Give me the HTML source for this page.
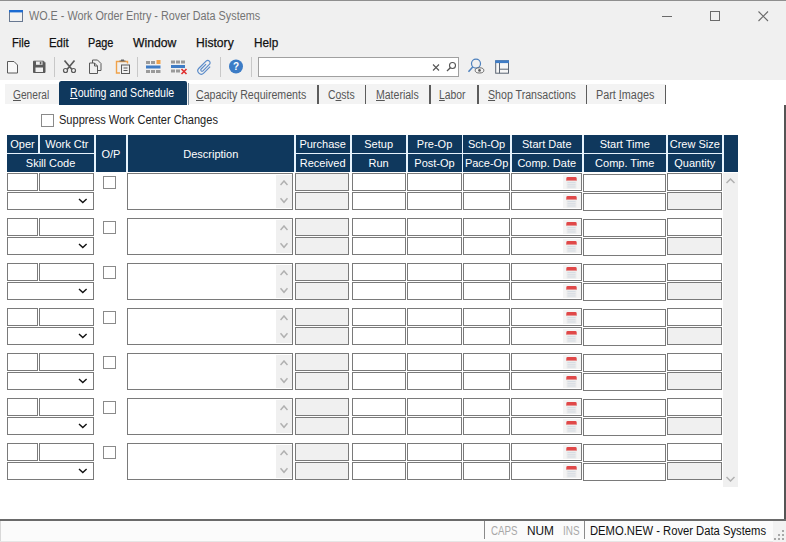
<!DOCTYPE html><html><head><meta charset="utf-8"><title>WO.E - Work Order Entry - Rover Data Systems</title><style>
*{box-sizing:border-box;margin:0;padding:0}
html,body{width:786px;height:542px;overflow:hidden;background:#fff}
body{position:relative;font-family:"Liberation Sans",sans-serif;font-size:12px;color:#1a1a1a}
.a{position:absolute}
.t{position:absolute;white-space:nowrap;line-height:1;transform-origin:0 0}
.h{position:absolute;background:#0f385d;color:#fff;text-align:center;font-size:11px;white-space:nowrap;overflow:hidden;padding-top:0.6px}
.i{position:absolute;border:1px solid #7a7a7a;background:#fff}
.g{background:#f0f0f0}
.sep{position:absolute;width:1px;background:#c8c8c8;top:57px;height:20px}
.tsep{position:absolute;width:1.6px;background:#5c5c5c;top:84.5px;height:19px}
u{text-decoration:underline;text-underline-offset:1px}
</style></head><body>
<div class="a" style="left:0;top:0;width:786px;height:79.600px;background:#f0f0f0"></div>
<div class="a" style="left:0;top:0;width:786px;height:1px;background:#8f8f8f"></div>
<svg class="a" style="left:8.5px;top:9.5px" width="14" height="12" viewBox="0 0 15 13"><rect x="0.5" y="0.5" width="14" height="12" fill="#f2f2f2" stroke="#5d6f8a"/><rect x="0" y="0" width="15" height="2.600" fill="#1c6bd2"/></svg>
<div class="t" style="left:28.5px;top:10px;font-size:12px;color:#747474;transform:scaleX(0.9009);">WO.E - Work Order Entry - Rover Data Systems</div>
<svg class="a" style="left:655px;top:5px" width="125" height="22" viewBox="0 0 125 22"><path d="M7 11.500h10" stroke="#6a6a6a" fill="none"/><rect x="55.500" y="6.500" width="9" height="9" stroke="#6a6a6a" fill="none"/><path d="M103.500 6.500l9.500 9.500M113 6.500l-9.500 9.500" stroke="#6a6a6a" stroke-width="1.100" fill="none"/></svg>
<div class="t" style="left:12px;top:36px;font-size:13px;color:#111;transform:scaleX(0.8591);-webkit-text-stroke:0.25px #111;">File</div>
<div class="t" style="left:49px;top:36px;font-size:13px;color:#111;transform:scaleX(0.8792);-webkit-text-stroke:0.25px #111;">Edit</div>
<div class="t" style="left:88.3px;top:36px;font-size:13px;color:#111;transform:scaleX(0.8362);-webkit-text-stroke:0.25px #111;">Page</div>
<div class="t" style="left:133.3px;top:36px;font-size:13px;color:#111;transform:scaleX(0.9384);-webkit-text-stroke:0.25px #111;">Window</div>
<div class="t" style="left:196.3px;top:36px;font-size:13px;color:#111;transform:scaleX(0.9319);-webkit-text-stroke:0.25px #111;">History</div>
<div class="t" style="left:253.5px;top:36px;font-size:13px;color:#111;transform:scaleX(0.9047);-webkit-text-stroke:0.25px #111;">Help</div>
<div class="sep" style="left:54px"></div>
<div class="sep" style="left:137px"></div>
<div class="sep" style="left:220px"></div>
<div class="sep" style="left:251px"></div>
<div class="a" style="left:258px;top:57px;width:201px;height:20px;background:#fff;border:1px solid #a0a0a0;z-index:-0"></div>
<svg class="a" style="left:0;top:55px" width="786" height="26" viewBox="0 55 786 26" fill="none">
<path d="M7.500 61.500h6.500l3.500 3.500v8h-10z" fill="#f8f8f8" stroke="#5a5a5a"/>
<path d="M33.500 61.200h10l1.500 1.500v9.800h-11.500z" fill="#5a5a5a" stroke="#5a5a5a"/><rect x="36" y="61.500" width="6.500" height="3.300" fill="#f0f0f0"/><rect x="39.800" y="61.800" width="1.600" height="2.600" fill="#5a5a5a"/><rect x="35.500" y="67.500" width="7.500" height="4.500" fill="#f0f0f0"/>
<path d="M64.500 60.500l7.500 9M74.500 60.500l-7.500 9" stroke="#5a5a5a" stroke-width="1.700"/><circle cx="65.500" cy="70.500" r="2" stroke="#5a5a5a" stroke-width="1.200"/><circle cx="73.500" cy="70.500" r="2" stroke="#5a5a5a" stroke-width="1.200"/>
<path d="M92.500 60h5l3.500 3.500v7h-8.500z" fill="#f0f0f0" stroke="#5a5a5a"/><path d="M89.500 63h5l3 3v7.500h-8z" fill="#f0f0f0" stroke="#5a5a5a"/><path d="M94.500 63v3h3" stroke="#5a5a5a"/>
<path d="M120 73h-3.500v-11.500h11v2" stroke="#f0a24a" stroke-width="1.400"/><path d="M119.500 61.500v-1h1.500v-1h3v1h1.500v1z" fill="#666"/><rect x="121.500" y="65" width="8" height="8.500" fill="#f0f0f0" stroke="#5a5a5a"/><path d="M123.500 68h4M123.500 70.500h4" stroke="#5a5a5a"/>
<rect x="146" y="61" width="4" height="3" fill="#9a9a9a"/><rect x="151" y="61" width="4" height="3" fill="#9a9a9a"/><rect x="156.500" y="60" width="4" height="4" fill="#f0a24a"/><rect x="146" y="65.500" width="14.500" height="3" fill="#3f7cc5"/><rect x="146" y="70" width="4" height="3" fill="#9a9a9a"/><rect x="151" y="70" width="4" height="3" fill="#9a9a9a"/><rect x="156" y="70" width="4.500" height="3" fill="#9a9a9a"/>
<rect x="171" y="60.500" width="4" height="3" fill="#9a9a9a"/><rect x="176" y="60.500" width="4" height="3" fill="#9a9a9a"/><rect x="181" y="60.500" width="4" height="3" fill="#9a9a9a"/><rect x="171" y="65" width="14" height="3" fill="#3f7cc5"/><rect x="171" y="69.500" width="4" height="3" fill="#9a9a9a"/><rect x="176" y="69.500" width="4" height="3" fill="#9a9a9a"/><path d="M181.500 69l5 5M186.500 69l-5 5" stroke="#e03030" stroke-width="1.600"/>
<path transform="translate(204.700 67.300) rotate(45) scale(1.07)" d="M-1.200-3V3.500A1.200 1.200 0 0 0 1.200 3.500V-5A2.200 2.200 0 0 0-3.200-5V4.500A3.200 3.200 0 0 0 3.200 4.500V-4" stroke="#5a8bc9" stroke-width="1.100"/>
<circle cx="236" cy="66.500" r="7" fill="#3c7cc6"/>
<text x="236" y="70.200" font-family="Liberation Sans,sans-serif" font-weight="bold" font-size="10" fill="#fff" text-anchor="middle">?</text>
<path d="M433 64.500l6 6M439 64.500l-6 6" stroke="#555" stroke-width="1.100"/>
<circle cx="452.500" cy="65.500" r="3" stroke="#555" stroke-width="1.100"/><path d="M450.300 67.700l-3.300 3.300" stroke="#555" stroke-width="1.300"/>
<circle cx="476" cy="63.600" r="4.500" stroke="#4d80bd" stroke-width="1.200"/><path d="M472.700 66.900l-4.200 4.800" stroke="#4d80bd" stroke-width="1.500"/><ellipse cx="479.500" cy="70.400" rx="4.300" ry="2.600" fill="#f4f4f4" stroke="#5a5a5a" stroke-width="0.900"/><circle cx="479.500" cy="70.400" r="1.300" fill="#5a5a5a"/>
<rect x="495.700" y="60.800" width="12.800" height="12.400" stroke="#5a6472" fill="#f6f6f6"/><rect x="495.200" y="60.300" width="13.800" height="2.800" fill="#3f7cc5"/><path d="M499.500 63v10.200M499.500 69.200h9" stroke="#5a6472"/>
</svg>
<div class="a" style="left:4.500px;top:84px;width:661px;height:19.700px;background:#f3f3f3"></div>
<div class="a" style="left:59px;top:81px;width:128.2px;height:23.600px;background:#0f385d;border-radius:2.500px 2px 0 0"></div>
<div class="t" style="left:12.7px;top:89px;font-size:12px;color:#565656;transform:scaleX(0.8480);"><u>G</u>eneral</div>
<div class="t" style="left:70px;top:86.5px;font-size:12px;color:#fff;transform:scaleX(0.8826);"><u>R</u>outing and Schedule</div>
<div class="t" style="left:195.8px;top:89px;font-size:12px;color:#565656;transform:scaleX(0.8836);"><u>C</u>apacity Requirements</div>
<div class="t" style="left:327.5px;top:89px;font-size:12px;color:#565656;transform:scaleX(0.8705);">C<u>o</u>sts</div>
<div class="t" style="left:375.6px;top:89px;font-size:12px;color:#565656;transform:scaleX(0.8770);"><u>M</u>aterials</div>
<div class="t" style="left:439.4px;top:89px;font-size:12px;color:#565656;transform:scaleX(0.8635);"><u>L</u>abor</div>
<div class="t" style="left:487.5px;top:89px;font-size:12px;color:#565656;transform:scaleX(0.8845);"><u>S</u>hop Transactions</div>
<div class="t" style="left:596.2px;top:89px;font-size:12px;color:#565656;transform:scaleX(0.9015);">Part <u>I</u>mages</div>
<div class="tsep" style="left:187.600px;top:82.500px;height:22px;background:#8492a0;width:1.400px"></div>
<div class="tsep" style="left:317.2px"></div>
<div class="tsep" style="left:364.8px"></div>
<div class="tsep" style="left:429.2px"></div>
<div class="tsep" style="left:477.3px"></div>
<div class="tsep" style="left:585.7px"></div>
<div class="tsep" style="left:664.5px"></div>
<div class="a" style="left:784px;top:105px;width:2px;height:415px;background:#555"></div>
<div class="a" style="left:41px;top:114px;width:13px;height:13px;border:1px solid #8a8a8a;background:#fff"></div>
<div class="t" style="left:58.6px;top:114px;font-size:12px;color:#222;transform:scaleX(0.9212);">Suppress Work Center Changes</div>
<div class="a" style="left:7px;top:134.500px;width:730.800px;height:37.300px;background:#e6f3fd"></div>
<div class="h" style="left:7px;top:135px;width:31px;height:17.6px;line-height:17.6px">Oper</div>
<div class="h" style="left:39.5px;top:135px;width:54.7px;height:17.6px;line-height:17.6px">Work Ctr</div>
<div class="h" style="left:7px;top:154px;width:87.2px;height:17.8px;line-height:17.8px">Skill Code</div>
<div class="h" style="left:96px;top:135px;width:29.8px;height:36.8px;line-height:36.8px">O/P</div>
<div class="h" style="left:127.8px;top:135px;width:166px;height:36.8px;line-height:36.8px">Description</div>
<div class="h" style="left:295.5px;top:135px;width:54.3px;height:17.6px;line-height:17.6px">Purchase</div>
<div class="h" style="left:295.5px;top:154px;width:54.3px;height:17.8px;line-height:17.8px">Received</div>
<div class="h" style="left:351.5px;top:135px;width:54.3px;height:17.6px;line-height:17.6px">Setup</div>
<div class="h" style="left:351.5px;top:154px;width:54.3px;height:17.8px;line-height:17.8px">Run</div>
<div class="h" style="left:407.5px;top:135px;width:54.1px;height:17.6px;line-height:17.6px">Pre-Op</div>
<div class="h" style="left:407.5px;top:154px;width:54.1px;height:17.8px;line-height:17.8px">Post-Op</div>
<div class="h" style="left:463.4px;top:135px;width:46.4px;height:17.6px;line-height:17.6px">Sch-Op</div>
<div class="h" style="left:463.4px;top:154px;width:46.4px;height:17.8px;line-height:17.8px">Pace-Op</div>
<div class="h" style="left:511.5px;top:135px;width:70.5px;height:17.6px;line-height:17.6px">Start Date</div>
<div class="h" style="left:511.5px;top:154px;width:70.5px;height:17.8px;line-height:17.8px">Comp. Date</div>
<div class="h" style="left:583.5px;top:135px;width:82.5px;height:17.6px;line-height:17.6px">Start Time</div>
<div class="h" style="left:583.5px;top:154px;width:82.5px;height:17.8px;line-height:17.8px">Comp. Time</div>
<div class="h" style="left:667.5px;top:135px;width:54.5px;height:17.6px;line-height:17.6px">Crew Size</div>
<div class="h" style="left:667.5px;top:154px;width:54.5px;height:17.8px;line-height:17.8px">Quantity</div>
<div class="h" style="left:723.5px;top:135px;width:14.3px;height:36.8px;line-height:36.8px"></div>
<div class="i" style="left:7px;top:173px;width:31px;height:17.8px"></div>
<div class="i" style="left:39.3px;top:173px;width:54.7px;height:17.8px"></div>
<div class="i" style="left:7px;top:192.2px;width:87px;height:17.6px"></div>
<svg class="a" style="left:78.400px;top:198.4px" width="10" height="6" viewBox="0 0 10 6"><path d="M1 1l3.800 3.500 3.800-3.500" stroke="#111" stroke-width="1.400" fill="none"/></svg>
<div class="a" style="left:103px;top:176px;width:13px;height:13px;border:1px solid #8a8a8a;background:#fff"></div>
<div class="i" style="left:127.3px;top:173.3px;width:166.2px;height:36.3px"></div>
<div class="a" style="left:276.200px;top:175.2px;width:15.600px;height:32.400px;background:#f0f0f0"></div>
<svg class="a" style="left:279.500px;top:179.7px" width="8" height="24" viewBox="0 0 8 24"><path d="M0.500 5l3.500-4 3.500 4M0.500 18.300l3.500 4 3.500-4" stroke="#b0b0b0" stroke-width="1.500" fill="none"/></svg>
<div class="i g" style="left:295.2px;top:173px;width:54.3px;height:17.5px"></div>
<div class="i g" style="left:295.2px;top:192.2px;width:54.3px;height:17.5px"></div>
<div class="i" style="left:351.5px;top:173px;width:54.1px;height:17.5px"></div>
<div class="i" style="left:351.5px;top:192.2px;width:54.1px;height:17.5px"></div>
<div class="i" style="left:407.3px;top:173px;width:54.5px;height:17.5px"></div>
<div class="i" style="left:407.3px;top:192.2px;width:54.5px;height:17.5px"></div>
<div class="i" style="left:463.3px;top:173px;width:46.7px;height:17.5px"></div>
<div class="i" style="left:463.3px;top:192.2px;width:46.7px;height:17.5px"></div>
<div class="i" style="left:511.4px;top:173px;width:70.6px;height:17.5px"></div>
<div class="i" style="left:511.4px;top:192.2px;width:70.6px;height:17.5px"></div>
<div class="a" style="left:562.500px;top:175px;width:18px;height:14px;background:#f4f4f4"></div>
<svg class="a" style="left:565.500px;top:176.5px" width="11" height="12" viewBox="0 0 11 12"><path d="M0.300 3.700V1.400A1.400 1.400 0 0 1 1.700 0H9.300A1.400 1.400 0 0 1 10.700 1.400V3.700z" fill="#e04848"/><rect x="0.500" y="3.700" width="10" height="8" rx="0.800" fill="#ececec"/><path d="M1.500 5.600h8M1.500 7.800h8M1.500 10h8" stroke="#d3dbe3" stroke-width="1"/></svg>
<div class="a" style="left:562.500px;top:194.2px;width:18px;height:14px;background:#f4f4f4"></div>
<svg class="a" style="left:565.500px;top:195.7px" width="11" height="12" viewBox="0 0 11 12"><path d="M0.300 3.700V1.400A1.400 1.400 0 0 1 1.700 0H9.300A1.400 1.400 0 0 1 10.700 1.400V3.700z" fill="#e04848"/><rect x="0.500" y="3.700" width="10" height="8" rx="0.800" fill="#ececec"/><path d="M1.500 5.600h8M1.500 7.800h8M1.500 10h8" stroke="#d3dbe3" stroke-width="1"/></svg>
<div class="i" style="left:583px;top:174.2px;width:83px;height:17.5px"></div>
<div class="i" style="left:583px;top:193.3px;width:83px;height:17.5px"></div>
<div class="i" style="left:667.2px;top:173px;width:54.6px;height:17.5px"></div>
<div class="i g" style="left:667.2px;top:192.2px;width:54.6px;height:17.5px"></div>
<div class="i" style="left:7px;top:218px;width:31px;height:17.8px"></div>
<div class="i" style="left:39.3px;top:218px;width:54.7px;height:17.8px"></div>
<div class="i" style="left:7px;top:237.2px;width:87px;height:17.6px"></div>
<svg class="a" style="left:78.400px;top:243.4px" width="10" height="6" viewBox="0 0 10 6"><path d="M1 1l3.800 3.500 3.800-3.500" stroke="#111" stroke-width="1.400" fill="none"/></svg>
<div class="a" style="left:103px;top:221px;width:13px;height:13px;border:1px solid #8a8a8a;background:#fff"></div>
<div class="i" style="left:127.3px;top:218.3px;width:166.2px;height:36.3px"></div>
<div class="a" style="left:276.200px;top:220.2px;width:15.600px;height:32.400px;background:#f0f0f0"></div>
<svg class="a" style="left:279.500px;top:224.7px" width="8" height="24" viewBox="0 0 8 24"><path d="M0.500 5l3.500-4 3.500 4M0.500 18.300l3.500 4 3.500-4" stroke="#b0b0b0" stroke-width="1.500" fill="none"/></svg>
<div class="i g" style="left:295.2px;top:218px;width:54.3px;height:17.5px"></div>
<div class="i g" style="left:295.2px;top:237.2px;width:54.3px;height:17.5px"></div>
<div class="i" style="left:351.5px;top:218px;width:54.1px;height:17.5px"></div>
<div class="i" style="left:351.5px;top:237.2px;width:54.1px;height:17.5px"></div>
<div class="i" style="left:407.3px;top:218px;width:54.5px;height:17.5px"></div>
<div class="i" style="left:407.3px;top:237.2px;width:54.5px;height:17.5px"></div>
<div class="i" style="left:463.3px;top:218px;width:46.7px;height:17.5px"></div>
<div class="i" style="left:463.3px;top:237.2px;width:46.7px;height:17.5px"></div>
<div class="i" style="left:511.4px;top:218px;width:70.6px;height:17.5px"></div>
<div class="i" style="left:511.4px;top:237.2px;width:70.6px;height:17.5px"></div>
<div class="a" style="left:562.500px;top:220px;width:18px;height:14px;background:#f4f4f4"></div>
<svg class="a" style="left:565.500px;top:221.5px" width="11" height="12" viewBox="0 0 11 12"><path d="M0.300 3.700V1.400A1.400 1.400 0 0 1 1.700 0H9.300A1.400 1.400 0 0 1 10.700 1.400V3.700z" fill="#e04848"/><rect x="0.500" y="3.700" width="10" height="8" rx="0.800" fill="#ececec"/><path d="M1.500 5.600h8M1.500 7.800h8M1.500 10h8" stroke="#d3dbe3" stroke-width="1"/></svg>
<div class="a" style="left:562.500px;top:239.2px;width:18px;height:14px;background:#f4f4f4"></div>
<svg class="a" style="left:565.500px;top:240.7px" width="11" height="12" viewBox="0 0 11 12"><path d="M0.300 3.700V1.400A1.400 1.400 0 0 1 1.700 0H9.300A1.400 1.400 0 0 1 10.700 1.400V3.700z" fill="#e04848"/><rect x="0.500" y="3.700" width="10" height="8" rx="0.800" fill="#ececec"/><path d="M1.500 5.600h8M1.500 7.800h8M1.500 10h8" stroke="#d3dbe3" stroke-width="1"/></svg>
<div class="i" style="left:583px;top:219.2px;width:83px;height:17.5px"></div>
<div class="i" style="left:583px;top:238.3px;width:83px;height:17.5px"></div>
<div class="i" style="left:667.2px;top:218px;width:54.6px;height:17.5px"></div>
<div class="i g" style="left:667.2px;top:237.2px;width:54.6px;height:17.5px"></div>
<div class="i" style="left:7px;top:263px;width:31px;height:17.8px"></div>
<div class="i" style="left:39.3px;top:263px;width:54.7px;height:17.8px"></div>
<div class="i" style="left:7px;top:282.2px;width:87px;height:17.6px"></div>
<svg class="a" style="left:78.400px;top:288.4px" width="10" height="6" viewBox="0 0 10 6"><path d="M1 1l3.800 3.500 3.800-3.500" stroke="#111" stroke-width="1.400" fill="none"/></svg>
<div class="a" style="left:103px;top:266px;width:13px;height:13px;border:1px solid #8a8a8a;background:#fff"></div>
<div class="i" style="left:127.3px;top:263.3px;width:166.2px;height:36.3px"></div>
<div class="a" style="left:276.200px;top:265.2px;width:15.600px;height:32.400px;background:#f0f0f0"></div>
<svg class="a" style="left:279.500px;top:269.7px" width="8" height="24" viewBox="0 0 8 24"><path d="M0.500 5l3.500-4 3.500 4M0.500 18.300l3.500 4 3.500-4" stroke="#b0b0b0" stroke-width="1.500" fill="none"/></svg>
<div class="i g" style="left:295.2px;top:263px;width:54.3px;height:17.5px"></div>
<div class="i g" style="left:295.2px;top:282.2px;width:54.3px;height:17.5px"></div>
<div class="i" style="left:351.5px;top:263px;width:54.1px;height:17.5px"></div>
<div class="i" style="left:351.5px;top:282.2px;width:54.1px;height:17.5px"></div>
<div class="i" style="left:407.3px;top:263px;width:54.5px;height:17.5px"></div>
<div class="i" style="left:407.3px;top:282.2px;width:54.5px;height:17.5px"></div>
<div class="i" style="left:463.3px;top:263px;width:46.7px;height:17.5px"></div>
<div class="i" style="left:463.3px;top:282.2px;width:46.7px;height:17.5px"></div>
<div class="i" style="left:511.4px;top:263px;width:70.6px;height:17.5px"></div>
<div class="i" style="left:511.4px;top:282.2px;width:70.6px;height:17.5px"></div>
<div class="a" style="left:562.500px;top:265px;width:18px;height:14px;background:#f4f4f4"></div>
<svg class="a" style="left:565.500px;top:266.5px" width="11" height="12" viewBox="0 0 11 12"><path d="M0.300 3.700V1.400A1.400 1.400 0 0 1 1.700 0H9.300A1.400 1.400 0 0 1 10.700 1.400V3.700z" fill="#e04848"/><rect x="0.500" y="3.700" width="10" height="8" rx="0.800" fill="#ececec"/><path d="M1.500 5.600h8M1.500 7.800h8M1.500 10h8" stroke="#d3dbe3" stroke-width="1"/></svg>
<div class="a" style="left:562.500px;top:284.2px;width:18px;height:14px;background:#f4f4f4"></div>
<svg class="a" style="left:565.500px;top:285.7px" width="11" height="12" viewBox="0 0 11 12"><path d="M0.300 3.700V1.400A1.400 1.400 0 0 1 1.700 0H9.300A1.400 1.400 0 0 1 10.700 1.400V3.700z" fill="#e04848"/><rect x="0.500" y="3.700" width="10" height="8" rx="0.800" fill="#ececec"/><path d="M1.500 5.600h8M1.500 7.800h8M1.500 10h8" stroke="#d3dbe3" stroke-width="1"/></svg>
<div class="i" style="left:583px;top:264.2px;width:83px;height:17.5px"></div>
<div class="i" style="left:583px;top:283.3px;width:83px;height:17.5px"></div>
<div class="i" style="left:667.2px;top:263px;width:54.6px;height:17.5px"></div>
<div class="i g" style="left:667.2px;top:282.2px;width:54.6px;height:17.5px"></div>
<div class="i" style="left:7px;top:308px;width:31px;height:17.8px"></div>
<div class="i" style="left:39.3px;top:308px;width:54.7px;height:17.8px"></div>
<div class="i" style="left:7px;top:327.2px;width:87px;height:17.6px"></div>
<svg class="a" style="left:78.400px;top:333.4px" width="10" height="6" viewBox="0 0 10 6"><path d="M1 1l3.800 3.500 3.800-3.500" stroke="#111" stroke-width="1.400" fill="none"/></svg>
<div class="a" style="left:103px;top:311px;width:13px;height:13px;border:1px solid #8a8a8a;background:#fff"></div>
<div class="i" style="left:127.3px;top:308.3px;width:166.2px;height:36.3px"></div>
<div class="a" style="left:276.200px;top:310.2px;width:15.600px;height:32.400px;background:#f0f0f0"></div>
<svg class="a" style="left:279.500px;top:314.7px" width="8" height="24" viewBox="0 0 8 24"><path d="M0.500 5l3.500-4 3.500 4M0.500 18.300l3.500 4 3.500-4" stroke="#b0b0b0" stroke-width="1.500" fill="none"/></svg>
<div class="i g" style="left:295.2px;top:308px;width:54.3px;height:17.5px"></div>
<div class="i g" style="left:295.2px;top:327.2px;width:54.3px;height:17.5px"></div>
<div class="i" style="left:351.5px;top:308px;width:54.1px;height:17.5px"></div>
<div class="i" style="left:351.5px;top:327.2px;width:54.1px;height:17.5px"></div>
<div class="i" style="left:407.3px;top:308px;width:54.5px;height:17.5px"></div>
<div class="i" style="left:407.3px;top:327.2px;width:54.5px;height:17.5px"></div>
<div class="i" style="left:463.3px;top:308px;width:46.7px;height:17.5px"></div>
<div class="i" style="left:463.3px;top:327.2px;width:46.7px;height:17.5px"></div>
<div class="i" style="left:511.4px;top:308px;width:70.6px;height:17.5px"></div>
<div class="i" style="left:511.4px;top:327.2px;width:70.6px;height:17.5px"></div>
<div class="a" style="left:562.500px;top:310px;width:18px;height:14px;background:#f4f4f4"></div>
<svg class="a" style="left:565.500px;top:311.5px" width="11" height="12" viewBox="0 0 11 12"><path d="M0.300 3.700V1.400A1.400 1.400 0 0 1 1.700 0H9.300A1.400 1.400 0 0 1 10.700 1.400V3.700z" fill="#e04848"/><rect x="0.500" y="3.700" width="10" height="8" rx="0.800" fill="#ececec"/><path d="M1.500 5.600h8M1.500 7.800h8M1.500 10h8" stroke="#d3dbe3" stroke-width="1"/></svg>
<div class="a" style="left:562.500px;top:329.2px;width:18px;height:14px;background:#f4f4f4"></div>
<svg class="a" style="left:565.500px;top:330.7px" width="11" height="12" viewBox="0 0 11 12"><path d="M0.300 3.700V1.400A1.400 1.400 0 0 1 1.700 0H9.300A1.400 1.400 0 0 1 10.700 1.400V3.700z" fill="#e04848"/><rect x="0.500" y="3.700" width="10" height="8" rx="0.800" fill="#ececec"/><path d="M1.500 5.600h8M1.500 7.800h8M1.500 10h8" stroke="#d3dbe3" stroke-width="1"/></svg>
<div class="i" style="left:583px;top:309.2px;width:83px;height:17.5px"></div>
<div class="i" style="left:583px;top:328.3px;width:83px;height:17.5px"></div>
<div class="i" style="left:667.2px;top:308px;width:54.6px;height:17.5px"></div>
<div class="i g" style="left:667.2px;top:327.2px;width:54.6px;height:17.5px"></div>
<div class="i" style="left:7px;top:353px;width:31px;height:17.8px"></div>
<div class="i" style="left:39.3px;top:353px;width:54.7px;height:17.8px"></div>
<div class="i" style="left:7px;top:372.2px;width:87px;height:17.6px"></div>
<svg class="a" style="left:78.400px;top:378.4px" width="10" height="6" viewBox="0 0 10 6"><path d="M1 1l3.800 3.500 3.800-3.500" stroke="#111" stroke-width="1.400" fill="none"/></svg>
<div class="a" style="left:103px;top:356px;width:13px;height:13px;border:1px solid #8a8a8a;background:#fff"></div>
<div class="i" style="left:127.3px;top:353.3px;width:166.2px;height:36.3px"></div>
<div class="a" style="left:276.200px;top:355.2px;width:15.600px;height:32.400px;background:#f0f0f0"></div>
<svg class="a" style="left:279.500px;top:359.7px" width="8" height="24" viewBox="0 0 8 24"><path d="M0.500 5l3.500-4 3.500 4M0.500 18.300l3.500 4 3.500-4" stroke="#b0b0b0" stroke-width="1.500" fill="none"/></svg>
<div class="i g" style="left:295.2px;top:353px;width:54.3px;height:17.5px"></div>
<div class="i g" style="left:295.2px;top:372.2px;width:54.3px;height:17.5px"></div>
<div class="i" style="left:351.5px;top:353px;width:54.1px;height:17.5px"></div>
<div class="i" style="left:351.5px;top:372.2px;width:54.1px;height:17.5px"></div>
<div class="i" style="left:407.3px;top:353px;width:54.5px;height:17.5px"></div>
<div class="i" style="left:407.3px;top:372.2px;width:54.5px;height:17.5px"></div>
<div class="i" style="left:463.3px;top:353px;width:46.7px;height:17.5px"></div>
<div class="i" style="left:463.3px;top:372.2px;width:46.7px;height:17.5px"></div>
<div class="i" style="left:511.4px;top:353px;width:70.6px;height:17.5px"></div>
<div class="i" style="left:511.4px;top:372.2px;width:70.6px;height:17.5px"></div>
<div class="a" style="left:562.500px;top:355px;width:18px;height:14px;background:#f4f4f4"></div>
<svg class="a" style="left:565.500px;top:356.5px" width="11" height="12" viewBox="0 0 11 12"><path d="M0.300 3.700V1.400A1.400 1.400 0 0 1 1.700 0H9.300A1.400 1.400 0 0 1 10.700 1.400V3.700z" fill="#e04848"/><rect x="0.500" y="3.700" width="10" height="8" rx="0.800" fill="#ececec"/><path d="M1.500 5.600h8M1.500 7.800h8M1.500 10h8" stroke="#d3dbe3" stroke-width="1"/></svg>
<div class="a" style="left:562.500px;top:374.2px;width:18px;height:14px;background:#f4f4f4"></div>
<svg class="a" style="left:565.500px;top:375.7px" width="11" height="12" viewBox="0 0 11 12"><path d="M0.300 3.700V1.400A1.400 1.400 0 0 1 1.700 0H9.300A1.400 1.400 0 0 1 10.700 1.400V3.700z" fill="#e04848"/><rect x="0.500" y="3.700" width="10" height="8" rx="0.800" fill="#ececec"/><path d="M1.500 5.600h8M1.500 7.800h8M1.500 10h8" stroke="#d3dbe3" stroke-width="1"/></svg>
<div class="i" style="left:583px;top:354.2px;width:83px;height:17.5px"></div>
<div class="i" style="left:583px;top:373.3px;width:83px;height:17.5px"></div>
<div class="i" style="left:667.2px;top:353px;width:54.6px;height:17.5px"></div>
<div class="i g" style="left:667.2px;top:372.2px;width:54.6px;height:17.5px"></div>
<div class="i" style="left:7px;top:398px;width:31px;height:17.8px"></div>
<div class="i" style="left:39.3px;top:398px;width:54.7px;height:17.8px"></div>
<div class="i" style="left:7px;top:417.2px;width:87px;height:17.6px"></div>
<svg class="a" style="left:78.400px;top:423.4px" width="10" height="6" viewBox="0 0 10 6"><path d="M1 1l3.800 3.500 3.800-3.500" stroke="#111" stroke-width="1.400" fill="none"/></svg>
<div class="a" style="left:103px;top:401px;width:13px;height:13px;border:1px solid #8a8a8a;background:#fff"></div>
<div class="i" style="left:127.3px;top:398.3px;width:166.2px;height:36.3px"></div>
<div class="a" style="left:276.200px;top:400.2px;width:15.600px;height:32.400px;background:#f0f0f0"></div>
<svg class="a" style="left:279.500px;top:404.7px" width="8" height="24" viewBox="0 0 8 24"><path d="M0.500 5l3.500-4 3.500 4M0.500 18.300l3.500 4 3.500-4" stroke="#b0b0b0" stroke-width="1.500" fill="none"/></svg>
<div class="i g" style="left:295.2px;top:398px;width:54.3px;height:17.5px"></div>
<div class="i g" style="left:295.2px;top:417.2px;width:54.3px;height:17.5px"></div>
<div class="i" style="left:351.5px;top:398px;width:54.1px;height:17.5px"></div>
<div class="i" style="left:351.5px;top:417.2px;width:54.1px;height:17.5px"></div>
<div class="i" style="left:407.3px;top:398px;width:54.5px;height:17.5px"></div>
<div class="i" style="left:407.3px;top:417.2px;width:54.5px;height:17.5px"></div>
<div class="i" style="left:463.3px;top:398px;width:46.7px;height:17.5px"></div>
<div class="i" style="left:463.3px;top:417.2px;width:46.7px;height:17.5px"></div>
<div class="i" style="left:511.4px;top:398px;width:70.6px;height:17.5px"></div>
<div class="i" style="left:511.4px;top:417.2px;width:70.6px;height:17.5px"></div>
<div class="a" style="left:562.500px;top:400px;width:18px;height:14px;background:#f4f4f4"></div>
<svg class="a" style="left:565.500px;top:401.5px" width="11" height="12" viewBox="0 0 11 12"><path d="M0.300 3.700V1.400A1.400 1.400 0 0 1 1.700 0H9.300A1.400 1.400 0 0 1 10.700 1.400V3.700z" fill="#e04848"/><rect x="0.500" y="3.700" width="10" height="8" rx="0.800" fill="#ececec"/><path d="M1.500 5.600h8M1.500 7.800h8M1.500 10h8" stroke="#d3dbe3" stroke-width="1"/></svg>
<div class="a" style="left:562.500px;top:419.2px;width:18px;height:14px;background:#f4f4f4"></div>
<svg class="a" style="left:565.500px;top:420.7px" width="11" height="12" viewBox="0 0 11 12"><path d="M0.300 3.700V1.400A1.400 1.400 0 0 1 1.700 0H9.300A1.400 1.400 0 0 1 10.700 1.400V3.700z" fill="#e04848"/><rect x="0.500" y="3.700" width="10" height="8" rx="0.800" fill="#ececec"/><path d="M1.500 5.600h8M1.500 7.800h8M1.500 10h8" stroke="#d3dbe3" stroke-width="1"/></svg>
<div class="i" style="left:583px;top:399.2px;width:83px;height:17.5px"></div>
<div class="i" style="left:583px;top:418.3px;width:83px;height:17.5px"></div>
<div class="i" style="left:667.2px;top:398px;width:54.6px;height:17.5px"></div>
<div class="i g" style="left:667.2px;top:417.2px;width:54.6px;height:17.5px"></div>
<div class="i" style="left:7px;top:443px;width:31px;height:17.8px"></div>
<div class="i" style="left:39.3px;top:443px;width:54.7px;height:17.8px"></div>
<div class="i" style="left:7px;top:462.2px;width:87px;height:17.6px"></div>
<svg class="a" style="left:78.400px;top:468.4px" width="10" height="6" viewBox="0 0 10 6"><path d="M1 1l3.800 3.500 3.800-3.500" stroke="#111" stroke-width="1.400" fill="none"/></svg>
<div class="a" style="left:103px;top:446px;width:13px;height:13px;border:1px solid #8a8a8a;background:#fff"></div>
<div class="i" style="left:127.3px;top:443.3px;width:166.2px;height:36.3px"></div>
<div class="a" style="left:276.200px;top:445.2px;width:15.600px;height:32.400px;background:#f0f0f0"></div>
<svg class="a" style="left:279.500px;top:449.7px" width="8" height="24" viewBox="0 0 8 24"><path d="M0.500 5l3.500-4 3.500 4M0.500 18.300l3.500 4 3.500-4" stroke="#b0b0b0" stroke-width="1.500" fill="none"/></svg>
<div class="i g" style="left:295.2px;top:443px;width:54.3px;height:17.5px"></div>
<div class="i g" style="left:295.2px;top:462.2px;width:54.3px;height:17.5px"></div>
<div class="i" style="left:351.5px;top:443px;width:54.1px;height:17.5px"></div>
<div class="i" style="left:351.5px;top:462.2px;width:54.1px;height:17.5px"></div>
<div class="i" style="left:407.3px;top:443px;width:54.5px;height:17.5px"></div>
<div class="i" style="left:407.3px;top:462.2px;width:54.5px;height:17.5px"></div>
<div class="i" style="left:463.3px;top:443px;width:46.7px;height:17.5px"></div>
<div class="i" style="left:463.3px;top:462.2px;width:46.7px;height:17.5px"></div>
<div class="i" style="left:511.4px;top:443px;width:70.6px;height:17.5px"></div>
<div class="i" style="left:511.4px;top:462.2px;width:70.6px;height:17.5px"></div>
<div class="a" style="left:562.500px;top:445px;width:18px;height:14px;background:#f4f4f4"></div>
<svg class="a" style="left:565.500px;top:446.5px" width="11" height="12" viewBox="0 0 11 12"><path d="M0.300 3.700V1.400A1.400 1.400 0 0 1 1.700 0H9.300A1.400 1.400 0 0 1 10.700 1.400V3.700z" fill="#e04848"/><rect x="0.500" y="3.700" width="10" height="8" rx="0.800" fill="#ececec"/><path d="M1.500 5.600h8M1.500 7.800h8M1.500 10h8" stroke="#d3dbe3" stroke-width="1"/></svg>
<div class="a" style="left:562.500px;top:464.2px;width:18px;height:14px;background:#f4f4f4"></div>
<svg class="a" style="left:565.500px;top:465.7px" width="11" height="12" viewBox="0 0 11 12"><path d="M0.300 3.700V1.400A1.400 1.400 0 0 1 1.700 0H9.300A1.400 1.400 0 0 1 10.700 1.400V3.700z" fill="#e04848"/><rect x="0.500" y="3.700" width="10" height="8" rx="0.800" fill="#ececec"/><path d="M1.500 5.600h8M1.500 7.800h8M1.500 10h8" stroke="#d3dbe3" stroke-width="1"/></svg>
<div class="i" style="left:583px;top:444.2px;width:83px;height:17.5px"></div>
<div class="i" style="left:583px;top:463.3px;width:83px;height:17.5px"></div>
<div class="i" style="left:667.2px;top:443px;width:54.6px;height:17.5px"></div>
<div class="i g" style="left:667.2px;top:462.2px;width:54.6px;height:17.5px"></div>
<div class="a" style="left:723px;top:173px;width:15px;height:314px;background:#f0f0f0"></div>
<svg class="a" style="left:726px;top:178px" width="9" height="6" viewBox="0 0 9 6"><path d="M0.500 5l4-4 4 4" stroke="#b0b0b0" stroke-width="1.500" fill="none"/></svg>
<svg class="a" style="left:726px;top:476px" width="9" height="6" viewBox="0 0 9 6"><path d="M0.500 1l4 4 4-4" stroke="#b0b0b0" stroke-width="1.500" fill="none"/></svg>
<div class="a" style="left:0;top:519px;width:786px;height:23px;background:#fbfbfb"></div>
<div class="a" style="left:0;top:521px;width:1px;height:21px;background:#d8d8d8"></div>
<div class="a" style="left:0;top:540.500px;width:786px;height:1px;background:#e6e6e6"></div>
<div class="a" style="left:0;top:519px;width:786px;height:2px;background:#6a6a6a"></div>
<div class="a" style="left:484px;top:521px;width:1px;height:18px;background:#8a8a8a"></div>
<div class="a" style="left:584px;top:521px;width:1px;height:18px;background:#8a8a8a"></div>
<div class="a" style="left:772.500px;top:521px;width:13.500px;height:21px;background:#f2f2f2"></div>
<div class="t" style="left:490.5px;top:525px;font-size:12px;color:#a8a8a8;transform:scaleX(0.8111);">CAPS</div>
<div class="t" style="left:527px;top:525px;font-size:12px;color:#111;transform:scaleX(0.9874);">NUM</div>
<div class="t" style="left:563px;top:525px;font-size:12px;color:#a8a8a8;transform:scaleX(0.8250);">INS</div>
<div class="t" style="left:589.5px;top:525px;font-size:12px;color:#111;transform:scaleX(0.9362);">DEMO.NEW - Rover Data Systems</div>
<svg class="a" style="left:773px;top:529px" width="12" height="12" viewBox="0 0 12 12" fill="#a8a8a8"><rect x="9" y="1" width="2" height="2"/><rect x="5" y="5" width="2" height="2"/><rect x="9" y="5" width="2" height="2"/><rect x="1" y="9" width="2" height="2"/><rect x="5" y="9" width="2" height="2"/><rect x="9" y="9" width="2" height="2"/></svg>
</body></html>
